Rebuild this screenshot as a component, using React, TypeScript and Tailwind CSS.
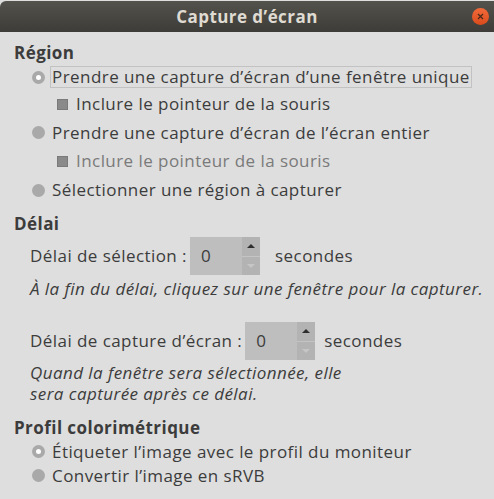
import React from 'react';

const Radio: React.FC<{ checked?: boolean }> = ({ checked }) => (
  <span className="w-[13px] h-[13px] rounded-full bg-[#a9a9a9] flex items-center justify-center shrink-0">
    {checked && <span className="w-[5px] h-[5px] rounded-full bg-white" />}
  </span>
);

const Check: React.FC = () => (
  <span className="w-[11px] h-[11px] bg-[#8a8a8a] border border-[#7a7a7a] shrink-0" />
);

const Spin: React.FC = () => (
  <div className="flex h-[38px] w-[70px] bg-[#bebebe] shrink-0">
    <div className="flex-1 flex items-center pl-[11px] text-[#3c3c3c]">0</div>
    <div className="w-[18px] flex flex-col bg-[#b3b3b3]">
      <div className="flex-1 flex items-center justify-center border-b border-[#c4c4c4]">
        <span className="w-0 h-0 border-l-[4px] border-r-[4px] border-b-[4px] border-l-transparent border-r-transparent border-b-[#2e2e2e]" />
      </div>
      <div className="flex-1 flex items-center justify-center">
        <span className="w-0 h-0 border-l-[4px] border-r-[4px] border-t-[4px] border-l-transparent border-r-transparent border-t-[#c6c6c6]" />
      </div>
    </div>
  </div>
);

export default function App() {
  return (
    <div
      className="w-[494px] h-[499px] bg-[#dedede] flex flex-col text-[17px] tracking-[0.44px] text-[#3c3c3c] overflow-hidden"
      style={{ fontFamily: '"Open Sans", "DejaVu Sans", sans-serif' }}
    >
      {/* Title bar */}
      <div className="h-[31px] mt-[1px] rounded-tl-[6px] bg-gradient-to-b from-[#54524c] to-[#3d3c38] flex items-center relative shrink-0">
        <div className="flex-1 text-center font-bold text-[#dfdbd2] text-[17px]">Capture d’écran</div>
        <div className="absolute right-[5px] top-[7px] w-[17px] h-[17px] rounded-full bg-gradient-to-b from-[#f26a3a] to-[#d94a1a] flex items-center justify-center">
          <svg width="7" height="7" viewBox="0 0 7 7">
            <path d="M1 1L6 6M6 1L1 6" stroke="#4a2a1a" strokeWidth="1.3" />
          </svg>
        </div>
      </div>

      <div className="flex flex-col pl-[14px] pt-[10px]">
        {/* Région */}
        <div className="font-bold leading-[22px]">Région</div>
        <div className="flex flex-col pl-[18px]">
          <div className="flex items-center h-[26px] gap-[5px]">
            <Radio checked />
            <span className="border border-[#c2c2c2] px-[1px] leading-[20px]">
              Prendre une capture d’écran d’une fenêtre unique
            </span>
          </div>
          <div className="flex items-center h-[28px] gap-[8px] pl-[25px]">
            <Check />
            <span>Inclure le pointeur de la souris</span>
          </div>
          <div className="flex items-center h-[29px] gap-[7px]">
            <Radio />
            <span>Prendre une capture d’écran de l’écran entier</span>
          </div>
          <div className="flex items-center h-[28px] gap-[8px] pl-[25px]">
            <Check />
            <span className="text-[#7a7a7a]">Inclure le pointeur de la souris</span>
          </div>
          <div className="flex items-center h-[30px] gap-[7px]">
            <Radio />
            <span>Sélectionner une région à capturer</span>
          </div>
        </div>

        {/* Délai */}
        <div className="font-bold leading-[22px] mt-[8px]">Délai</div>
        <div className="flex flex-col pl-[16px]">
          <div className="flex items-center h-[38px] mt-[2px]">
            <span className="mr-[3px]">Délai de sélection :</span>
            <Spin />
            <span className="ml-[15px]">secondes</span>
          </div>
          <div className="italic leading-[24px] mt-[2px]">À la fin du délai, cliquez sur une fenêtre pour la capturer.</div>
          <div className="h-[21px]" />
          <div className="flex items-center h-[38px]">
            <span className="mr-[3px]">Délai de capture d’écran :</span>
            <Spin />
            <span className="ml-[9px]">secondes</span>
          </div>
          <div className="italic leading-[21px] mt-[2px]">
            Quand la fenêtre sera sélectionnée, elle
            <br />
            sera capturée après ce délai.
          </div>
        </div>

        {/* Profil */}
        <div className="font-bold leading-[22px] mt-[13px]">Profil colorimétrique</div>
        <div className="flex flex-col pl-[18px]">
          <div className="flex items-center h-[25px] gap-[7px]">
            <Radio checked />
            <span>Étiqueter l’image avec le profil du moniteur</span>
          </div>
          <div className="flex items-center h-[23px] gap-[7px]">
            <Radio />
            <span>Convertir l’image en sRVB</span>
          </div>
        </div>
      </div>
    </div>
  );
}
